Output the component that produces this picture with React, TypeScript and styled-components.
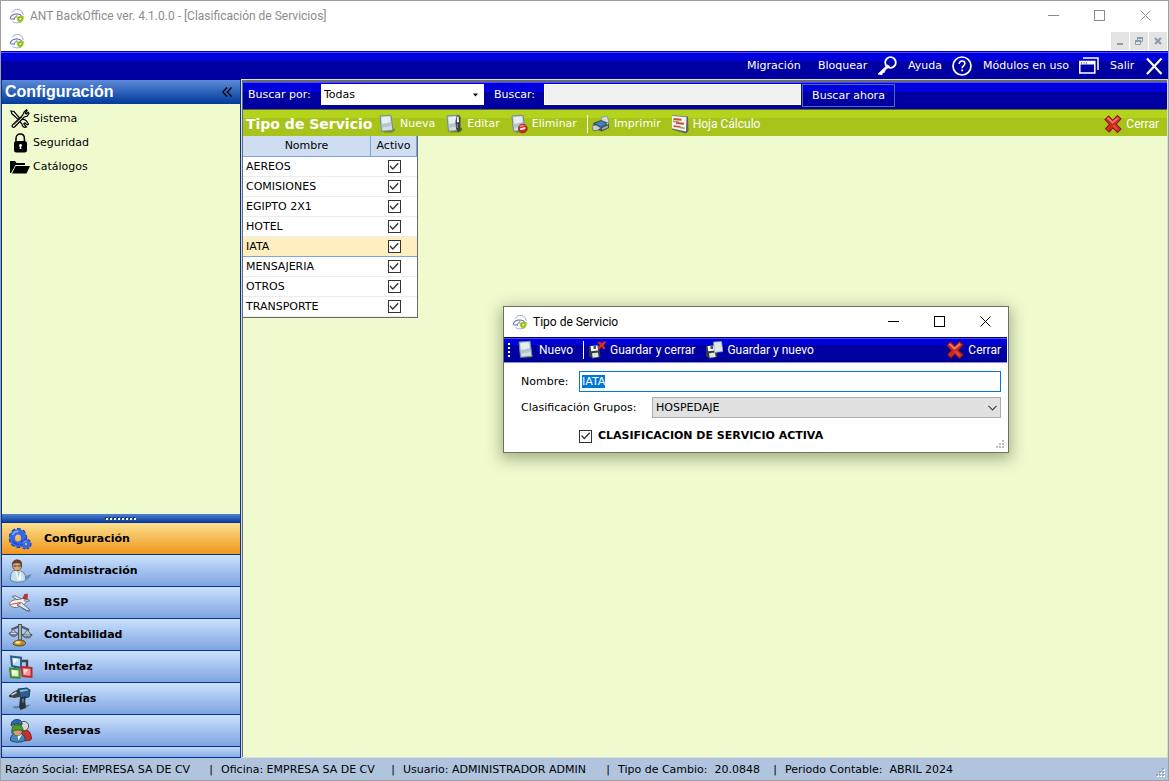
import React, { useEffect, useRef } from "react";
import styled, { createGlobalStyle, css } from "styled-components";

const verdana = `"DejaVu Sans", Verdana, sans-serif`;
const segoe = `Roboto, "Segoe UI", sans-serif`;

const Global = createGlobalStyle`
  *, *::before, *::after { box-sizing: border-box; }
  body { margin: 0; font: 11px/16px ${verdana}; color: #000; }
  button, input, select { font: inherit; color: inherit; margin: 0; }
  button { border: 0; padding: 0; background: none; cursor: pointer; }
  svg { display: block; flex: none; }
`;

const glossyBlue = css`
  background: linear-gradient(#0000b0 0 1px, #4a4aff 1px 2px, #0000dc 2px 10px, #0000a2 10px);
`;

/* ---------- Window frame ---------- */

const Frame = styled.div`
  position: relative;
  display: flex;
  flex-direction: column;
  min-width: 1020px;
  height: 100vh;
  min-height: 600px;
  border: 1px solid #a0a0a0;
  background: #fff;
  overflow: hidden;
`;

const TitleBar = styled.header<{ $active?: boolean }>`
  display: flex;
  align-items: center;
  flex: none;
  height: 29px;
  padding-left: 8px;
  gap: 5px;
  background: #fff;
  color: ${(p) => (p.$active ? "#000" : "#8c8c8c")};
`;

const TitleText = styled.h1`
  flex: 1;
  margin: 0;
  font: 400 12px/18px ${segoe};
  white-space: nowrap;
`;

const CaptionButtons = styled.div`
  display: flex;
`;

const CaptionButton = styled.button`
  display: grid;
  place-items: center;
  width: 46px;
  height: 29px;
`;

const MdiBar = styled.div`
  display: flex;
  align-items: center;
  justify-content: space-between;
  flex: none;
  height: 21px;
  padding: 1px 0 0 8px;
`;

const MdiButtons = styled.div`
  display: flex;
  gap: 1px;
  padding-right: 1px;
`;

const MdiButton = styled.button`
  display: grid;
  place-items: center;
  width: 18px;
  height: 18px;
  background: #e4e4e4;
  color: #8c9cab;
`;

const MainMenu = styled.nav`
  display: flex;
  flex: none;
  align-items: center;
  justify-content: flex-end;
  gap: 11px;
  height: 29px;
  padding-right: 4px;
  color: #fff;
  ${glossyBlue}
`;

const MenuItem = styled.button<{ $width: number }>`
  display: flex;
  align-items: center;
  justify-content: space-between;
  width: ${(p) => p.$width}px;
  height: 26px;
  white-space: nowrap;
`;

const Workspace = styled.div`
  display: grid;
  grid-template-columns: 240px minmax(0, 1fr);
  flex: 1;
  min-height: 0;
`;

/* ---------- Sidebar ---------- */

const Sidebar = styled.aside`
  display: flex;
  flex-direction: column;
  min-height: 0;
  border: solid #003399;
  border-width: 0 1px;
  background: #effbcf;
`;

const SidebarHeader = styled.div`
  display: flex;
  align-items: center;
  justify-content: space-between;
  flex: none;
  height: 24px;
  padding: 0 8px 0 3px;
  background: linear-gradient(#5b8ad8, #003a9b);
  color: #fff;
`;

const SidebarTitle = styled.h2`
  margin: 0;
  font: 700 16px/22px "Liberation Sans", Arial, sans-serif;
`;

const CollapseButton = styled.button`
  color: #000;
`;

const TreeList = styled.ul`
  flex: 1;
  min-height: 0;
  margin: 0;
  padding: 3px 0 0 8px;
  list-style: none;
`;

const TreeItem = styled.li`
  display: flex;
  height: 24px;
`;

const TreeLink = styled.a`
  display: flex;
  align-items: center;
  gap: 3px;
  color: #000;
  text-decoration: none;
`;

const Splitter = styled.div`
  display: grid;
  place-items: center;
  flex: none;
  height: 9px;
  border-bottom: 1px solid #003399;
  background: linear-gradient(#4f80d0, #0b429f);
`;

const NavButton = styled.button<{ $active?: boolean }>`
  display: flex;
  align-items: center;
  flex: none;
  gap: 10px;
  height: 32px;
  padding: 1px 0 0 6px;
  border-bottom: 1px solid #003399;
  background: ${(p) =>
    p.$active ? "linear-gradient(#fbe08c, #f0961e)" : "linear-gradient(#cbe1fc, #7ea5e2)"};
  font-weight: 700;
  text-align: left;
`;

const NavFooter = styled.div`
  flex: none;
  height: 11px;
  border-bottom: 1px solid #003399;
  background: linear-gradient(#c3dbfa, #86abe4);
`;

/* ---------- Main panel ---------- */

const Panel = styled.main`
  display: flex;
  flex-direction: column;
  margin: 0 1px 1px 1px;
  border: solid #6b6b6b;
  border-width: 2px 0 0 1px;
  background: #effbcf;
  box-shadow: 0 0 0 1px #dcdcdc;
`;

const SearchBar = styled.form`
  display: flex;
  flex: none;
  align-items: flex-start;
  height: 28px;
  padding: 2px 0 0 5px;
  border-bottom: 1px solid #5c6a2c;
  color: #fff;
  background: linear-gradient(#4a4aff 0 1px, #0000dc 1px 10px, #0000a2 10px);
`;

const SearchLabel = styled.label`
  width: 73px;
  line-height: 21px;
  white-space: nowrap;
`;

const SearchLabelShort = styled(SearchLabel)`
  width: 50px;
`;

const SelectWrap = styled.div<{ $grow?: boolean }>`
  display: grid;
  align-items: center;
  ${(p) => (p.$grow ? "flex: 1;" : "width: 163px; margin-right: 10px;")}
  & > * { grid-area: 1 / 1; }
  & > svg { justify-self: end; margin-right: ${(p) => (p.$grow ? 4 : 5)}px; pointer-events: none; }
`;

const FlatSelect = styled.select<{ $grey?: boolean }>`
  appearance: none;
  width: 100%;
  height: 21px;
  padding: 0 20px 0 3px;
  border: ${(p) => (p.$grey ? "1px solid #adadad" : "0")};
  border-radius: 0;
  background: ${(p) => (p.$grey ? "#e1e1e1" : "#fff")};
  color: #000;
`;

const SearchInput = styled.input`
  width: 257px;
  height: 21px;
  padding: 0 3px;
  border: 1px solid #fff;
  outline: 0;
  background: #f0f0f0;
  color: #000;
`;

const SearchButton = styled.button`
  width: 93px;
  height: 23px;
  margin-left: 1px;
  border: 1px solid #4c6cb0;
  line-height: 20px;
`;

const GreenBar = styled.div`
  display: flex;
  flex: none;
  align-items: center;
  height: 26px;
  padding: 1px 8px 0 3px;
  color: #fff;
  background: linear-gradient(#b4d31c 0 8px, #a8c41a 8px);
`;

const PanelTitle = styled.h2`
  width: 132px;
  margin: 0;
  font: 700 14px/20px ${verdana};
  white-space: nowrap;
`;

const ToolButton = styled.button<{ $segoe?: boolean; $end?: boolean }>`
  display: flex;
  align-items: center;
  gap: 4px;
  margin-right: ${(p) => (p.$end ? 0 : 10)}px;
  margin-left: ${(p) => (p.$end ? "auto" : 0)};
  height: 20px;
  white-space: nowrap;
  ${(p) => p.$segoe && `font: 12px/18px ${segoe};`}
`;

const ToolSeparator = styled.span`
  width: 1px;
  height: 18px;
  margin-right: 4px;
  background: #fff;
`;

const Grid = styled.table`
  align-self: flex-start;
  width: 175px;
  border-collapse: separate;
  border-spacing: 0;
  table-layout: fixed;
  border: solid #6b6b6b;
  border-width: 0 1px 1px 0;
  background: #fff;
`;

const HeadCell = styled.th<{ $width: number }>`
  width: ${(p) => p.$width}px;
  height: 21px;
  padding: 0;
  border-right: 1px solid #7ea5de;
  border-bottom: 1px solid #7ea5de;
  background: #cfddf0;
  font-weight: 400;
`;

const Row = styled.tr<{ $selected?: boolean }>`
  height: 20px;
  background: ${(p) => (p.$selected ? "#ffeebf" : "#fff")};
  & > td { border-bottom: 1px solid ${(p) => (p.$selected ? "#7ea5de" : "#ececec")}; }
`;

const Cell = styled.td<{ $center?: boolean }>`
  padding: 0 0 0 3px;
  line-height: 19px;
  ${(p) => p.$center && "padding: 0; text-align: center;"}
`;

const Check = styled.input`
  appearance: none;
  display: block;
  width: 13px;
  height: 13px;
  margin: 0 auto;
  border: 1px solid #333;
  background: #fff;
  &:checked::before {
    content: "";
    display: block;
    width: 11px;
    height: 11px;
    background: #333;
    clip-path: polygon(10% 51%, 18% 42%, 39% 64%, 84% 17%, 93% 26%, 39% 82%);
  }
`;

/* ---------- Dialog ---------- */

const Dialog = styled.section`
  position: absolute;
  left: 502px;
  top: 305px;
  width: 506px;
  border: 1px solid #6c7360;
  background: #fff;
  box-shadow: 0 4px 14px 2px rgba(60, 70, 30, 0.42);
`;

const DialogBar = styled.div`
  display: flex;
  align-items: center;
  height: 26px;
  margin: 1px 1px 0 0;
  padding: 0 6px 0 3px;
  color: #fff;
  background: linear-gradient(#000060 0 1px, #4a4aff 1px 2px, #0000d8 2px 8px, #0000a2 8px 24px, #000070 24px 25px, #8c8cff 25px);
`;

const Fields = styled.form`
  display: flex;
  flex-direction: column;
  gap: 5px;
  padding: 8px 7px 8px 17px;
`;

const Field = styled.div`
  display: flex;
  align-items: center;
`;

const FieldLabel = styled.label<{ $width: number }>`
  width: ${(p) => p.$width}px;
  white-space: nowrap;
`;

const NameInput = styled.input`
  flex: 1;
  min-width: 0;
  height: 21px;
  padding: 0 2px;
  border: 1px solid #0078d7;
  outline: 0;
  &::selection { background: #0078d7; color: #fff; }
`;

const ActiveLabel = styled.label`
  display: flex;
  align-items: center;
  align-self: flex-start;
  gap: 6px;
  margin: 5px 0 0 58px;
  font-weight: 700;
`;

const Grip = styled.div`
  position: absolute;
  right: 2px;
  bottom: 2px;
`;

/* ---------- Status bar ---------- */

const StatusBar = styled.footer`
  position: relative;
  display: flex;
  flex: none;
  align-items: center;
  height: 22px;
  padding: 2px 4px 0;
  background: #b0c4de;
`;

const StatusItem = styled.div<{ $width: number }>`
  display: flex;
  justify-content: space-between;
  width: ${(p) => p.$width}px;
  padding-right: 8px;
  white-space: pre;
`;

/* ---------- Drawings ---------- */

const Logo = () => (
  <svg width="16" height="16" viewBox="0 0 16 16" fill="none">
    <path d="M3 4.500C4.500 2 7 1 9.500 1.500S14 4 14.300 7M3.500 13.500c2.500 1.600 5.500 1.800 8 .6" stroke="#a3a8d6" strokeWidth="1" />
    <path d="M1 10.500C2 7.500 5 5.800 8.500 6c2 .1 3.500 1 4.300 2.200" stroke="#5a62a8" strokeWidth="1.100" />
    <path d="M1.500 11h4M5.500 11.500c0-1.800 1-3.300 2.700-3.800" stroke="#5a62a8" strokeWidth="1" />
    <path d="M7.500 9l4.500-1.500 3 1-.8 4-2.700 2.500-3-2z" fill="#9ccc1c" />
    <path d="M9.500 10l2.800-.8 1.200.8-1.800 2.700-1.700-.5z" fill="#e7f59c" stroke="#5f8a20" strokeWidth=".6" />
  </svg>
);

const Glyph = ({ kind }: { kind: "min" | "max" | "close" }) => (
  <svg width="11" height="11" viewBox="0 0 11 11" fill="none" stroke="currentColor">
    {kind === "min" && <path d="M0 5.500h11" />}
    {kind === "max" && <rect x=".5" y=".5" width="10" height="10" />}
    {kind === "close" && <path d="M.5.5l10 10M10.500.5l-10 10" />}
  </svg>
);

const MdiGlyph = ({ kind }: { kind: "min" | "restore" | "close" }) => (
  <svg width="10" height="10" viewBox="0 0 10 10" fill="none" stroke="currentColor">
    {kind === "min" && <path d="M2 8h6" strokeWidth="2" />}
    {kind === "restore" && (
      <>
        <path d="M3.500 4V1.500h5v4H7M1.500 4.500h5v4h-5z" />
        <path d="M3 2h6M1 5h6" strokeWidth="2" />
      </>
    )}
    {kind === "close" && <path d="M2 2l6 6M8 2L2 8" strokeWidth="2.200" />}
  </svg>
);

const KeyIcon = () => (
  <svg width="20" height="20" viewBox="0 0 20 20" fill="none" stroke="#fff">
    <circle cx="13.500" cy="6.500" r="5.300" strokeWidth="1.800" />
    <path d="M10.500 9L1 18l4 .8.500-2 2-.5.500-2 4.500-4z" fill="#fff" strokeWidth=".8" />
  </svg>
);

const HelpIcon = () => (
  <svg width="20" height="20" viewBox="0 0 20 20" fill="none" stroke="#fff">
    <circle cx="10" cy="10" r="9" strokeWidth="1.700" />
    <path d="M7.200 8c0-1.900 1.200-2.900 2.900-2.900 1.600 0 2.800 1 2.800 2.500 0 2-2.700 2.200-2.700 4.600" strokeWidth="1.500" />
    <path d="M10.200 13.500v1.800" strokeWidth="1.800" />
  </svg>
);

const WindowsIcon = () => (
  <svg width="20" height="17" viewBox="0 0 20 17" fill="none" stroke="#fff">
    <path d="M4 1h15v12" strokeWidth="1.500" />
    <rect x=".8" y="4.500" width="15" height="11.500" strokeWidth="1.500" />
    <path d="M1 5.800h15" strokeWidth="3.400" />
    <path d="M2 6h1M4.500 6h1M7 6h1" stroke="#0000a2" />
  </svg>
);

const ExitIcon = () => (
  <svg width="20" height="20" viewBox="0 0 20 20" stroke="#fff" strokeWidth="2.200">
    <path d="M3 2.500l14.500 15.500M17.500 2.500L3 18" />
  </svg>
);

const ToolsIcon = () => (
  <svg width="20" height="20" viewBox="0 0 20 20" fill="none" stroke="#000" strokeWidth="1.200">
    <path d="M1 2l3 .5 6 7-1.500 1.300-6.500-6z" fill="#fff" />
    <path d="M11.500 10.500c2-.5 3-.2 4.500 1l2.500 3.500c-.5 1-1 1-2 .3l-1.500-1.500-1.200 1 2.700 3.200c-2.500 1-4.500-.5-4.500-3L9.700 12.500" fill="#effbcf" />
    <path d="M12.500 6.500l1.700-3.700 2.300-2 .7.700-2 2.700 1 .8 2-1.700.8.900-1.800 3-3 .8L5 17.500c-1.500 1.800-4 .2-2.500-1.700z" fill="#effbcf" />
    <path d="M4 15.500l8-7.500" strokeWidth=".8" />
  </svg>
);

const LockIcon = () => (
  <svg width="20" height="20" viewBox="0 0 20 20" fill="none">
    <path d="M6 9V5.500C6 2.700 7.800 1 10.200 1s4.200 1.700 4.200 4.500V9" stroke="#000" strokeWidth="1.500" />
    <rect x="4" y="8" width="13" height="11.500" rx="2.500" fill="#000" />
    <path d="M10.500 11a1.500 1.500 0 0 1 .8 2.700V16H9.700v-2.300A1.500 1.500 0 0 1 10.500 11z" fill="#fff" />
  </svg>
);

const FolderIcon = () => (
  <svg width="20" height="16" viewBox="0 0 20 16">
    <path d="M0 14V2h5l1.500 2H15v2H5.500L1 14z" fill="#000" />
    <path d="M5.700 7H20l-3.500 7.500H2z" fill="#000" />
  </svg>
);

const Sheet = ({ children }: { children?: React.ReactNode }) => (
  <svg width="18" height="20" viewBox="0 0 18 20">
    <path d="M5 17l10-3 2.500 2-3.500 2.500H6z" fill="#24300c" opacity=".4" />
    <path d="M2 2l11-.8 2 15.300-11.500.8z" fill="#c3d3da" stroke="#75898f" strokeWidth="1" />
    <path d="M3.500 3.200l8-.6.800 5.500-8 2z" fill="#e6eef2" />
    <path d="M4 10.500l8.500-2.300.8 3.500-8.600 2z" fill="#b3c6cf" />
    <path d="M4.800 14l8.700-1.800.3 3.400-8.600.6z" fill="#d3e0e6" />
    {children}
  </svg>
);

const EditIcon = () => (
  <Sheet>
    <path d="M12 16.500l5-3-.5 2.500-3 2.500z" fill="#3f6114" />
    <path d="M10.500 7.500l1-5.500L14 1l1.500 2v11l-2 4-2.500-3z" fill="#3c4348" />
    <path d="M11.800 3l1.700-1 .5 6-2 .5z" fill="#f5f5f5" />
    <path d="M11.800 10h1v4h-1z" fill="#8b969c" />
  </Sheet>
);

const DeleteIcon = () => (
  <Sheet>
    <circle cx="12.800" cy="14.500" r="4.400" fill="#cf2a22" stroke="#8f1713" strokeWidth=".7" />
    <path d="M9.500 12.500c1-2 4-2.500 6-.8l-5 1.600z" fill="#ee8078" />
    <path d="M10.300 14.200l5-1.200v2l-5 1.200z" fill="#fff" />
  </Sheet>
);

const PrinterIcon = () => (
  <svg width="18" height="18" viewBox="0 0 18 18">
    <path d="M9 2.500l6-1.500 2 6-6 2z" fill="#d5dde0" stroke="#7b8588" strokeWidth=".7" />
    <path d="M1 8l8-3 8 3v5l-7 3.500L3 14z" fill="#46535c" />
    <path d="M3.500 8.500l6-2.500 4.500 3-5.500 2.500z" fill="#3f83c4" />
    <path d="M0 11l4-1 5 3-4 2.500H1z" fill="#c4d0d8" stroke="#46515a" strokeWidth=".6" />
    <path d="M10 13l6-2.500v2L10 15z" fill="#9baab2" />
    <circle cx="15.500" cy="8.500" r="1" fill="#9cf04c" />
  </svg>
);

const SpreadsheetIcon = () => (
  <svg width="18" height="20" viewBox="0 0 18 20">
    <path d="M1 1.500l16 1 .5 14-2.500 3L1 15.500z" fill="#59635c" />
    <path d="M1 1.500l14.500 1.300-.500 14.700L1 14.500z" fill="#f2f4ef" />
    <path d="M2.500 5l8 .8M5 9l8 .8" stroke="#cf4840" strokeWidth="1.900" />
    <path d="M2.500 12l7 1" stroke="#cf4840" strokeWidth="1.600" />
    <path d="M2 7.300l6 .6M9 13.500l4.500.8" stroke="#86ab60" strokeWidth="1.500" />
    <path d="M1 1.500l15 1.300" stroke="#848b85" />
  </svg>
);

const RedCross = () => (
  <svg width="18" height="18" viewBox="0 0 18 18" fill="none" strokeLinecap="square">
    <path d="M4.500 4.500l9 9.500M13.500 4L5 13.500" stroke="#7c140c" strokeWidth="6" />
    <path d="M4.500 4.500l9 9.500M13.500 4L5 13.500" stroke="#cc2a20" strokeWidth="4.400" />
    <path d="M4 3.500l4.500 4 5-4" stroke="#ef7a6c" strokeWidth="1.800" />
    <path d="M10 11l3 3" stroke="#e64a3e" strokeWidth="2" />
  </svg>
);

const Disk = () => (
  <g>
    <path d="M1 5l10-1 1.500 12-8 1.500L1 15z" fill="#343b40" />
    <path d="M2.500 5l7-.6.700 5-7 .8z" fill="#f4f7f8" />
    <path d="M5.500 5v3h2.500V4.800z" fill="#4b565d" />
    <path d="M4 12.200l6-.8.700 4.600-6 .8z" fill="#d7e8df" />
  </g>
);

const SaveCloseIcon = () => (
  <svg width="18" height="18" viewBox="0 0 18 18">
    <Disk />
    <path d="M9.500 1.500L12 .5l1.800 1.800L16.500 0 18 1.500 15.500 4.500 17.500 7 16 8.500 13.500 6 11 8.200 9.500 6.500l2.500-2.300z" fill="#d62f22" />
  </svg>
);

const SaveNewIcon = () => (
  <svg width="18" height="18" viewBox="0 0 18 18">
    <Disk />
    <path d="M8.500 1l8-.5L18 10.500l-8.500 1z" fill="#dbe8ec" stroke="#8799a0" strokeWidth=".7" />
  </svg>
);

const GearsIcon = () => (
  <svg width="26" height="24" viewBox="0 0 26 24" fill="none">
    <ellipse cx="10" cy="11" rx="7.600" ry="8.300" stroke="#1b3fae" strokeWidth="3.400" strokeDasharray="3.400 1.800" />
    <ellipse cx="10" cy="11" rx="5.800" ry="6.300" stroke="#3565e8" strokeWidth="5.600" />
    <path d="M4.500 8c1.500-3 3.500-4 6-3.500" stroke="#86abff" strokeWidth="1.600" />
    <path d="M5 14c1.500 2.500 3.500 3.500 6 3.500" stroke="#1e46bd" strokeWidth="1.400" />
    <circle cx="18" cy="17" r="4.400" stroke="#1b3fae" strokeWidth="2.400" strokeDasharray="2.400 1.300" />
    <circle cx="18" cy="17" r="2.900" fill="#dfb070" stroke="#3565e8" strokeWidth="3.400" />
    <path d="M15.500 15.500c.8-1.200 2-1.700 3.200-1.300" stroke="#86abff" />
  </svg>
);

const PersonIcon = () => (
  <svg width="26" height="24" viewBox="0 0 26 24">
    <path d="M14 18l10-3-3 4-6 4z" fill="#33507e" opacity=".45" />
    <path d="M2.500 21c-.3-6 1-9 4.500-9.800l5 .8c4.500 1 6 4 5.500 9.500-3 2-11.500 2.500-15-.5z" fill="#c5dfec" stroke="#587a92" strokeWidth=".9" />
    <path d="M7 11.500l3 10 3.500-1-1-8z" fill="#f6fbfd" />
    <path d="M9 12l1.500 7 1.500-6.500z" fill="#a9c4d2" />
    <ellipse cx="9" cy="6.500" rx="4.600" ry="5.300" fill="#d6a37c" stroke="#6a4a35" strokeWidth=".8" />
    <path d="M4 7C3.500 3 6 .5 9.500.6c4 .1 5.300 3.400 4.300 8C13 9 12.500 6 12 4.500 9 3.500 5 3.500 4 7z" fill="#604230" />
    <path d="M5.500 7h3M9.500 7h3" stroke="#3d3029" strokeWidth="1" />
  </svg>
);

const PlaneIcon = () => (
  <svg width="26" height="24" viewBox="0 0 26 24">
    <path d="M12 17l8 2 4 2-5-.5z" fill="#33507e" opacity=".5" />
    <path d="M10 9.500L4 5.500l3-.8 8 3.800z" fill="#dde2e4" stroke="#58616a" strokeWidth=".8" />
    <path d="M1.500 12.500c1-3 5-4 9-4l6-1.500 4 2-5 5-7 2.500c-4 .3-6.500-1.500-7-4z" fill="#f0f2f2" stroke="#606970" strokeWidth=".9" />
    <path d="M15 7.500l1.500-4L19.500 3l-.5 6z" fill="#d22c26" stroke="#86201c" strokeWidth=".6" />
    <path d="M17 8l5 1.500-2 1-4-.5z" fill="#c9d0d4" stroke="#58616a" strokeWidth=".6" />
    <path d="M9 14l4.500-2.500 8.500 7.500-3 .5-7-4z" fill="#e0e5e8" stroke="#58616a" strokeWidth=".9" />
    <path d="M2.500 13.500l10-2" stroke="#d64a42" strokeWidth="1.200" />
  </svg>
);

const ScalesIcon = () => (
  <svg width="26" height="24" viewBox="0 0 26 24" fill="none">
    <path d="M3.500 6.500L12 3l9 4" stroke="#4e5860" strokeWidth="2.400" />
    <path d="M12 1v18" stroke="#4e5860" strokeWidth="4" />
    <path d="M12 2v16" stroke="#a4b1b9" strokeWidth="2" />
    <path d="M2 10.500L5 6l4 4.500M15 12l4.500-5 4 5" stroke="#5d6870" />
    <path d="M1 10h9c-.5 4.500-8 4.500-9 0zM14 11.500h10c-.5 4.500-9 4.500-10 0z" fill="#74828b" stroke="#434e56" strokeWidth=".8" />
    <path d="M2.500 10.500h6M16 12h6" stroke="#cfd9de" strokeWidth="1" />
    <path d="M5 21c0-2.500 4-4 7-4s6 1.500 5.500 4c-2 2.500-10.500 2.500-12.500 0z" fill="#b98a30" stroke="#5e4412" />
    <ellipse cx="10" cy="19.500" rx="2.800" ry="1.400" fill="#f8dc7e" />
  </svg>
);

const NetworkIcon = () => (
  <svg width="26" height="24" viewBox="0 0 26 24">
    <path d="M12 6h7v7M7 11v4" fill="none" stroke="#3a4550" strokeWidth="2.400" />
    <path d="M3 1.500l10 1.200v10L4 11z" fill="#b7dcf5" stroke="#2d5e88" strokeWidth="2" />
    <path d="M2 13.500l9.500 1v8.300L3 22z" fill="#d8f2ca" stroke="#428c2b" strokeWidth="2" />
    <path d="M13.500 12l10 1v9l-9-1z" fill="#f29595" stroke="#b82a30" strokeWidth="2" />
    <path d="M15.500 14l5 .5-4.500 5z" fill="#ffe0df" />
    <path d="M5 3.500l5.500.5-5 5z" fill="#f4fbff" />
    <path d="M4 15.500l5 .5-4.500 4z" fill="#fff" />
  </svg>
);

const DrillIcon = () => (
  <svg width="26" height="24" viewBox="0 0 26 24">
    <path d="M4 19.500l19-2-4 3-12 1z" fill="#33507e" opacity=".5" />
    <path d="M1 8.500L5 5l6-3 1 8-6 1-5-1z" fill="#3c4146" />
    <path d="M10 2l9-1 3 2-1 7-8 1.500z" fill="#2c6090" stroke="#143552" strokeWidth=".9" />
    <path d="M12 3l7-.7 1.500 1.200-8 1.500z" fill="#8ebde1" />
    <path d="M12 10.500l6-1.500-.8 5 .8 7-5.500 2-1.500-3z" fill="#2a333c" />
    <path d="M14 12l2-.5-.5 4-1 .5z" fill="#4f86b5" />
    <path d="M3 7.500l5-3 1 1.500-5 2.500z" fill="#c9cfd3" />
  </svg>
);

const PeopleIcon = () => (
  <svg width="26" height="24" viewBox="0 0 26 24">
    <path d="M12 20c0-6 2-9 5.500-9s5.500 3 6 9c-3 2.500-8 2-11.500 0z" fill="#c92c2c" stroke="#741616" strokeWidth=".9" />
    <circle cx="16" cy="7" r="4.600" fill="#dcd7d4" stroke="#565656" strokeWidth="1" />
    <path d="M3 14c0-3 2-6 6-6l3 7H4z" fill="#3d7cb2" />
    <circle cx="8.500" cy="6" r="4.800" fill="#c98f68" stroke="#5b3f2c" strokeWidth=".6" />
    <path d="M3 6.500C3 2.500 5.500.5 9 .5c3.500 0 5.500 2 5 5.500-3.500-1.500-7-1.500-11 .5z" fill="#2b6ba8" stroke="#173c61" strokeWidth=".8" />
    <path d="M2.500 21.500C2 16 5.500 14 10.500 14c4.500 0 7 3 6.500 7.500-4 2.300-10.500 2.300-14.500 0z" fill="#4485ba" stroke="#193f60" strokeWidth=".9" />
    <path d="M9 15l1.500 6.500L14 15.500z" fill="#f4f6f8" />
    <ellipse cx="9.500" cy="12" rx="4.600" ry="4.800" fill="#d99d74" stroke="#5b3f2c" strokeWidth=".6" />
    <path d="M4 12.500C3.500 8 6 6 9.500 6s6 2.500 5.500 6c-3.500-1.500-7-1.500-11 .5z" fill="#43a42d" stroke="#21600f" strokeWidth=".8" />
  </svg>
);

const DoubleChevron = () => (
  <svg width="10" height="10" viewBox="0 0 10 10" fill="none" stroke="currentColor" strokeWidth="1.300">
    <path d="M5 .5L.8 5 5 9.500M9.500.5L5.300 5l4.200 4.500" />
  </svg>
);

const DropArrow = () => (
  <svg width="7" height="4" viewBox="0 0 7 4"><path d="M1 .5h5L3.500 3.500z" fill="#000" /></svg>
);

const ChevronDown = () => (
  <svg width="9" height="6" viewBox="0 0 9 6" fill="none" stroke="#444" strokeWidth="1.200"><path d="M.5.800l4 4 4-4" /></svg>
);

const SplitDots = () => (
  <svg width="32" height="3" viewBox="0 0 32 3">
    {Array.from({ length: 8 }, (_, i) => (
      <g key={i}>
        <rect x={i * 4} y="0" width="2" height="2" fill="#16305f" />
        <rect x={i * 4 + 1} y="1" width="2" height="2" fill="#fff" />
      </g>
    ))}
  </svg>
);

const BarGrip = () => (
  <svg width="10" height="16" viewBox="0 0 10 16">
    {[0, 4, 8, 12].map((y) => <rect key={y} x="1" y={y + 1} width="2" height="2" fill="#fff" />)}
  </svg>
);

const SizeGrip = ({ light }: { light?: boolean }) => (
  <svg width="11" height="11" viewBox="0 0 11 11">
    {[[6, 0], [6, 3], [6, 6], [3, 3], [3, 6], [0, 6]].map(([x, y]) => (
      <g key={`${x}-${y}`}>
        {light && <rect x={x + 2} y={y + 2} width="2" height="2" fill="#fff" />}
        <rect x={x + 1} y={y + 1} width="2" height="2" fill={light ? "#97a5b8" : "#bdbdbd"} />
      </g>
    ))}
  </svg>
);

/* ---------- Data ---------- */

const modules = [
  { name: "Configuración", Icon: GearsIcon },
  { name: "Administración", Icon: PersonIcon },
  { name: "BSP", Icon: PlaneIcon },
  { name: "Contabilidad", Icon: ScalesIcon },
  { name: "Interfaz", Icon: NetworkIcon },
  { name: "Utilerías", Icon: DrillIcon },
  { name: "Reservas", Icon: PeopleIcon },
];

const tree = [
  { name: "Sistema", Icon: ToolsIcon },
  { name: "Seguridad", Icon: LockIcon },
  { name: "Catálogos", Icon: FolderIcon },
];

const services = ["AEREOS", "COMISIONES", "EGIPTO 2X1", "HOTEL", "IATA", "MENSAJERIA", "OTROS", "TRANSPORTE"];

const status = [
  { text: "Razón Social: EMPRESA SA DE CV", width: 216 },
  { text: "Oficina: EMPRESA SA DE CV", width: 182 },
  { text: "Usuario: ADMINISTRADOR ADMIN", width: 215 },
  { text: "Tipo de Cambio:  20.0848", width: 167 },
  { text: "Periodo Contable:  ABRIL 2024", width: 190 },
];

function WindowButtons() {
  return (
    <CaptionButtons>
      <CaptionButton aria-label="Minimizar"><Glyph kind="min" /></CaptionButton>
      <CaptionButton aria-label="Maximizar"><Glyph kind="max" /></CaptionButton>
      <CaptionButton aria-label="Cerrar ventana"><Glyph kind="close" /></CaptionButton>
    </CaptionButtons>
  );
}

function ServiceDialog() {
  const nameRef = useRef<HTMLInputElement>(null);
  useEffect(() => {
    nameRef.current?.focus();
    nameRef.current?.select();
  }, []);
  return (
    <Dialog role="dialog" aria-label="Tipo de Servicio">
      <TitleBar $active>
        <Logo />
        <TitleText as="h2">Tipo de Servicio</TitleText>
        <WindowButtons />
      </TitleBar>
      <DialogBar>
        <BarGrip />
        <ToolButton $segoe><Sheet />Nuevo</ToolButton>
        <ToolSeparator />
        <ToolButton $segoe><SaveCloseIcon />Guardar y cerrar</ToolButton>
        <ToolButton $segoe><SaveNewIcon />Guardar y nuevo</ToolButton>
        <ToolButton $segoe $end><RedCross />Cerrar</ToolButton>
      </DialogBar>
      <Fields onSubmit={(e) => e.preventDefault()}>
        <Field>
          <FieldLabel htmlFor="nombre" $width={58}>Nombre:</FieldLabel>
          <NameInput id="nombre" ref={nameRef} defaultValue="IATA" />
        </Field>
        <Field>
          <FieldLabel htmlFor="grupo" $width={131}>Clasificación Grupos:</FieldLabel>
          <SelectWrap $grow>
            <FlatSelect id="grupo" $grey><option>HOSPEDAJE</option></FlatSelect>
            <ChevronDown />
          </SelectWrap>
        </Field>
        <ActiveLabel>
          <Check type="checkbox" defaultChecked />
          CLASIFICACION DE SERVICIO ACTIVA
        </ActiveLabel>
      </Fields>
      <Grip><SizeGrip /></Grip>
    </Dialog>
  );
}

export default function App() {
  return (
    <>
      <Global />
      <Frame>
        <TitleBar>
          <Logo />
          <TitleText>ANT BackOffice ver. 4.1.0.0 - [Clasificación de Servicios]</TitleText>
          <WindowButtons />
        </TitleBar>
        <MdiBar>
          <Logo />
          <MdiButtons>
            <MdiButton aria-label="Minimizar"><MdiGlyph kind="min" /></MdiButton>
            <MdiButton aria-label="Restaurar"><MdiGlyph kind="restore" /></MdiButton>
            <MdiButton aria-label="Cerrar"><MdiGlyph kind="close" /></MdiButton>
          </MdiButtons>
        </MdiBar>
        <MainMenu>
          <MenuItem $width={60}>Migración</MenuItem>
          <MenuItem $width={79}>Bloquear<KeyIcon /></MenuItem>
          <MenuItem $width={64}>Ayuda<HelpIcon /></MenuItem>
          <MenuItem $width={116}>Módulos en uso<WindowsIcon /></MenuItem>
          <MenuItem $width={54}>Salir<ExitIcon /></MenuItem>
        </MainMenu>
        <Workspace>
          <Sidebar>
            <SidebarHeader>
              <SidebarTitle>Configuración</SidebarTitle>
              <CollapseButton aria-label="Contraer"><DoubleChevron /></CollapseButton>
            </SidebarHeader>
            <TreeList>
              {tree.map(({ name, Icon }) => (
                <TreeItem key={name}>
                  <TreeLink href="#"><Icon />{name}</TreeLink>
                </TreeItem>
              ))}
            </TreeList>
            <Splitter><SplitDots /></Splitter>
            {modules.map(({ name, Icon }, i) => (
              <NavButton key={name} $active={i === 0}><Icon />{name}</NavButton>
            ))}
            <NavFooter />
          </Sidebar>
          <Panel>
            <SearchBar onSubmit={(e) => e.preventDefault()}>
              <SearchLabel htmlFor="campo">Buscar por:</SearchLabel>
              <SelectWrap>
                <FlatSelect id="campo"><option>Todas</option></FlatSelect>
                <DropArrow />
              </SelectWrap>
              <SearchLabelShort htmlFor="buscar">Buscar:</SearchLabelShort>
              <SearchInput id="buscar" />
              <SearchButton>Buscar ahora</SearchButton>
            </SearchBar>
            <GreenBar>
              <PanelTitle>Tipo de Servicio</PanelTitle>
              <ToolButton><Sheet />Nueva</ToolButton>
              <ToolButton><EditIcon />Editar</ToolButton>
              <ToolButton><DeleteIcon />Eliminar</ToolButton>
              <ToolSeparator />
              <ToolButton><PrinterIcon />Imprimir</ToolButton>
              <ToolButton $segoe><SpreadsheetIcon />Hoja Cálculo</ToolButton>
              <ToolButton $segoe $end><RedCross />Cerrar</ToolButton>
            </GreenBar>
            <Grid>
              <thead>
                <tr>
                  <HeadCell $width={128}>Nombre</HeadCell>
                  <HeadCell $width={46}>Activo</HeadCell>
                </tr>
              </thead>
              <tbody>
                {services.map((name) => (
                  <Row key={name} $selected={name === "IATA"}>
                    <Cell>{name}</Cell>
                    <Cell $center>
                      <Check type="checkbox" defaultChecked aria-label={`${name} activo`} />
                    </Cell>
                  </Row>
                ))}
              </tbody>
            </Grid>
          </Panel>
        </Workspace>
        <StatusBar>
          {status.map(({ text, width }, i) => (
            <StatusItem key={text} $width={width}>
              <span>{text}</span>
              {i < status.length - 1 && <span>|</span>}
            </StatusItem>
          ))}
          <Grip><SizeGrip light /></Grip>
        </StatusBar>
        <ServiceDialog />
      </Frame>
    </>
  );
}
